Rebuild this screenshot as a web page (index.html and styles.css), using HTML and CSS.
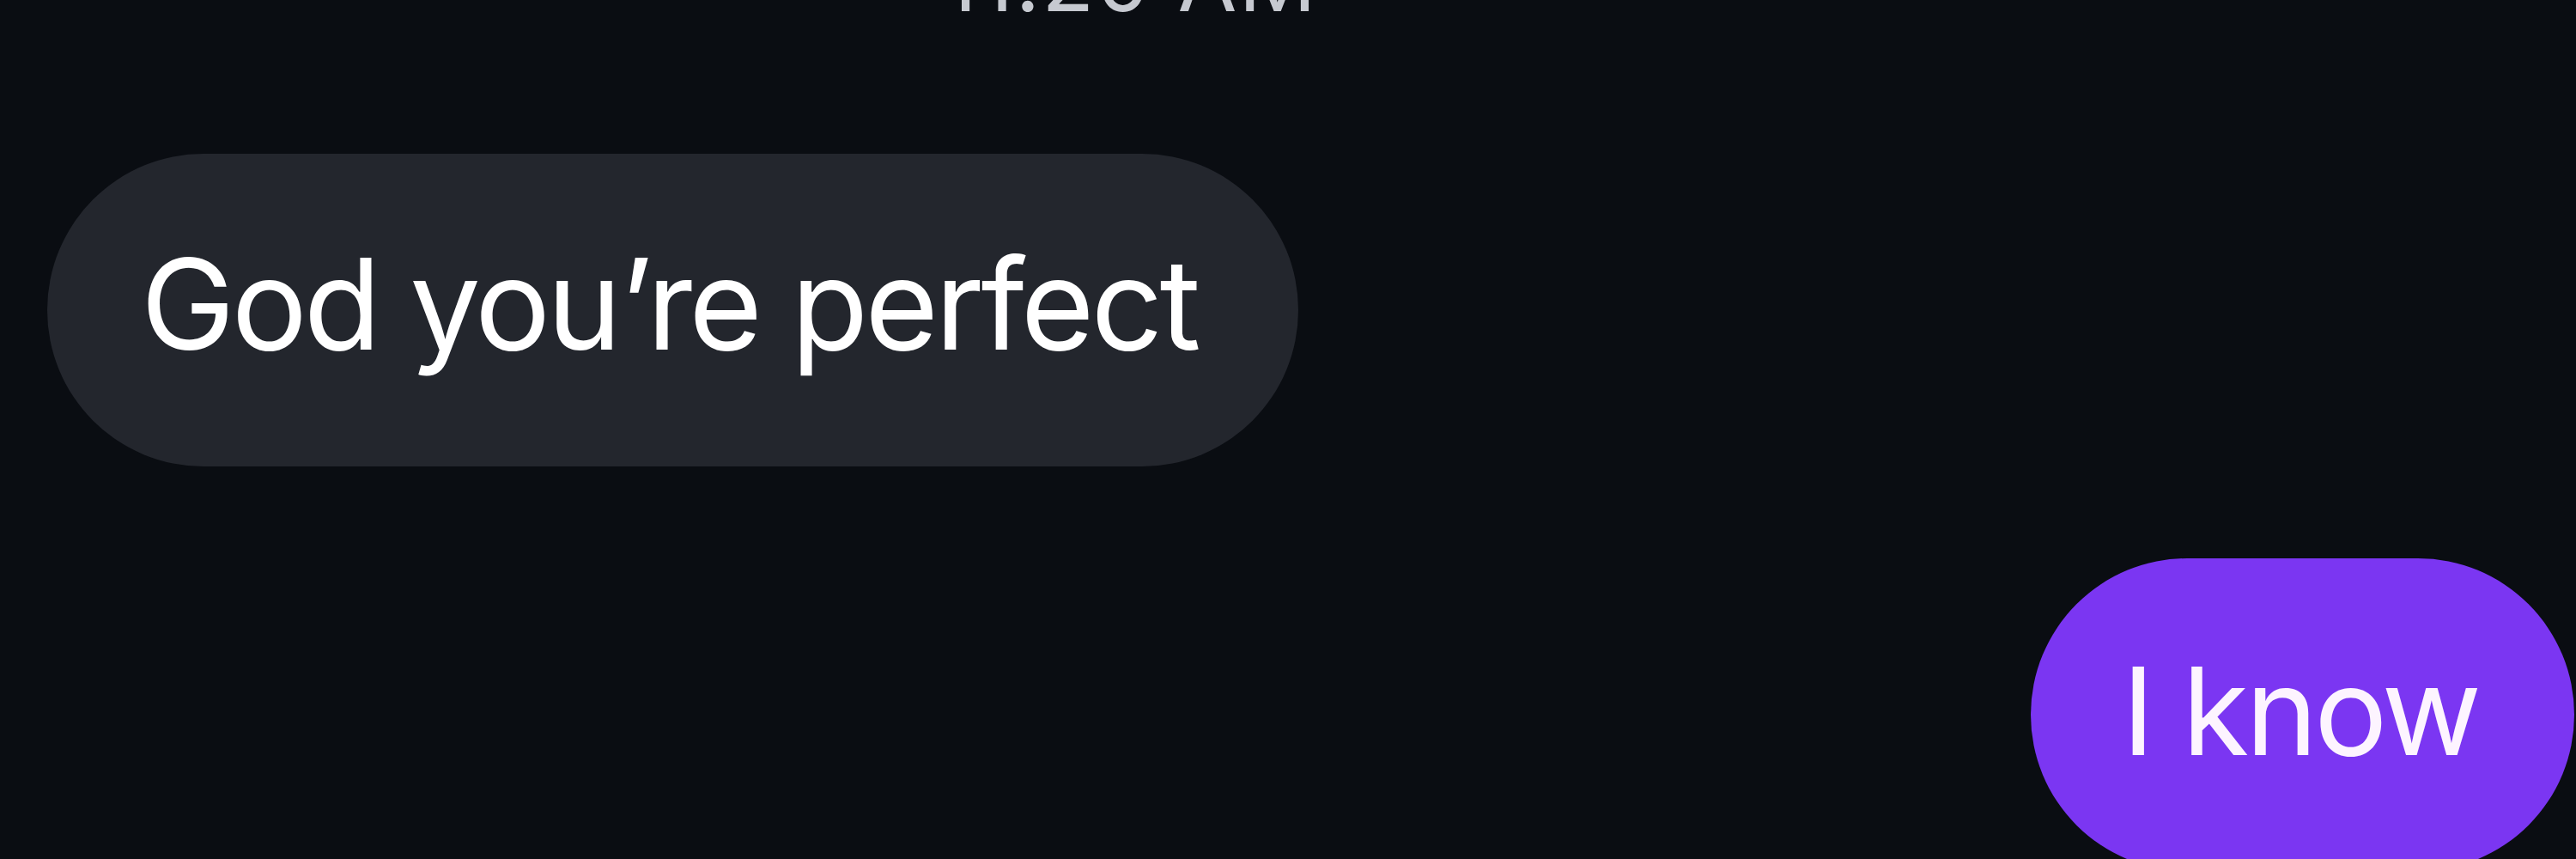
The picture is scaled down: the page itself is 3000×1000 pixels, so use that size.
FILE: index.html
```html
<!DOCTYPE html>
<html lang="en">
<head>
<meta charset="utf-8">
<title>Messages</title>
<link rel="stylesheet" href="styles.css">
</head>
<body>
<main class="chat">
  <div class="timestamp-row"><span class="timestamp">11:20 AM</span></div>
  <div class="row row-in"><div class="bubble bubble-in">God you’re perfect</div></div>
  <div class="row row-out"><div class="bubble bubble-out">I know</div></div>
</main>
</body>
</html>
```

FILE: styles.css
```css
html, body {
  margin: 0;
  padding: 0;
  background: #0a0d12;
}
body {
  width: 3000px;
  height: 1000px;
  overflow: hidden;
  font-family: Inter, "Liberation Sans", Arial, sans-serif;
}
.chat {
  display: flex;
  flex-direction: column;
}
.timestamp-row {
  display: flex;
  justify-content: center;
  padding-right: 368px;
  margin-top: -73px;
}
.timestamp {
  font-size: 100px;
  line-height: 100px;
  letter-spacing: 2px;
  color: #c6c9d0;
  white-space: nowrap;
}
.row {
  display: flex;
}
.row-in {
  justify-content: flex-start;
  padding-left: 55px;
  margin-top: 152px;
}
.row-out {
  justify-content: flex-end;
  padding-right: 2px;
  margin-top: 107px;
}
.bubble {
  color: #ffffff;
  white-space: nowrap;
  border-radius: 182px;
  line-height: 166px;
  letter-spacing: -4px;
}
.bubble-in {
  background: #23262d;
  font-size: 147px;
  padding: 92px 118px 106px 109px;
}
.bubble-out {
  background: #7b36f2;
  color: #fdf4ff;
  font-size: 142px;
  padding: 94px 112px 104px 106px;
}
```
